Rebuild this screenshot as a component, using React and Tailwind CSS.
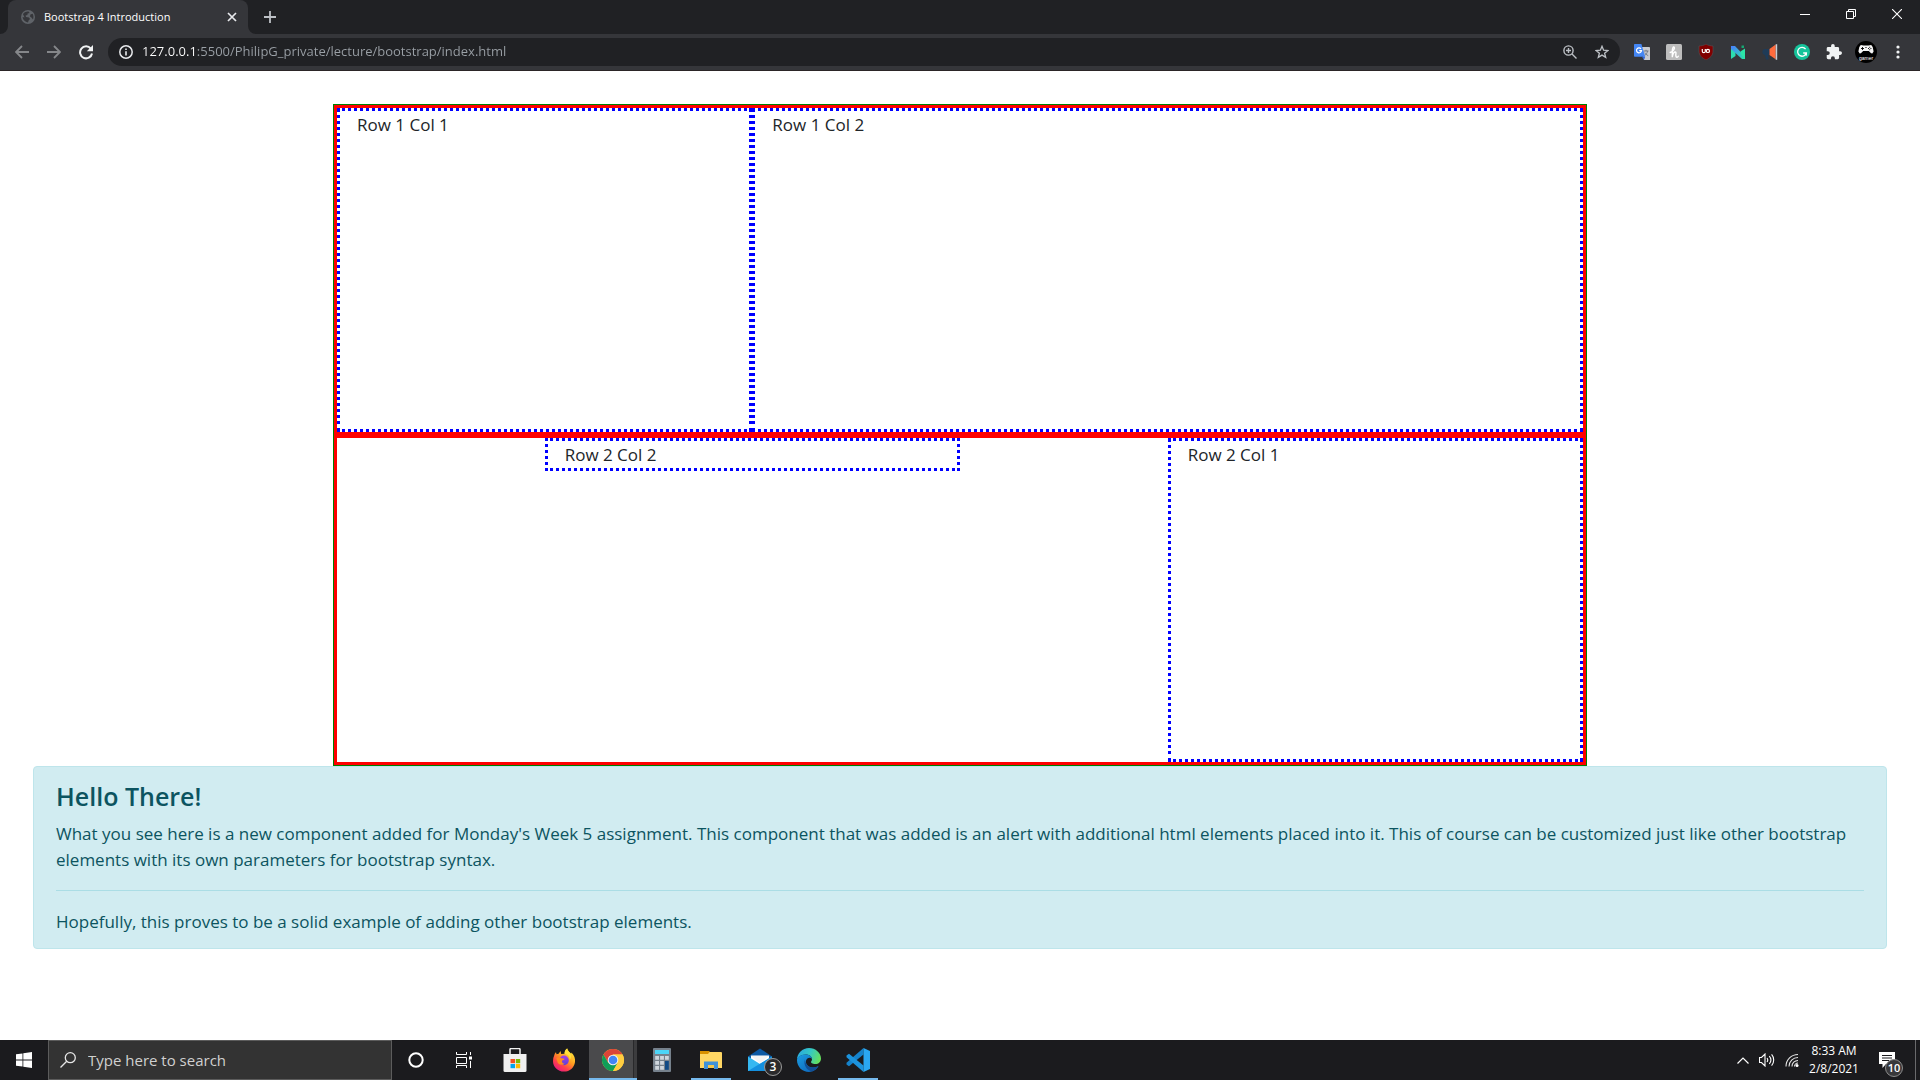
import React from "react";

const ui = "font-['Open_Sans','Noto_Sans',sans-serif]";

function Globe() {
  return (
    <svg viewBox="0 0 14 14" className="size-3.5 shrink-0" aria-hidden="true">
      <circle cx="7" cy="7" r="7" fill="#5f6368" />
      <path d="M2 4.2C3 2.4 5 1.4 7.6 1.6L8.6 3 6.6 3.6 6.4 5 4.6 5.4 5 7l3 .4 1 1.6-1.4 1.4L7 12.4C4 12 1.8 9.600 1.600 7L3.600 7.600z" fill="#35363a" />
      <path d="M9.400 4.600l2.200-.8C12.600 5.400 12.700 7.600 12 9.400L10.400 7.400 9 6.600z" fill="#35363a" />
    </svg>
  );
}

function TabStrip() {
  return (
    <header className="flex h-[34px] items-stretch bg-[#202124]">
      <div className="relative ml-2 flex w-60 items-center rounded-t-lg bg-[#35363a] pl-[13px] pr-2.5">
        <svg viewBox="0 0 8 8" className="absolute bottom-0 -left-2 size-2" aria-hidden="true"><path d="M8 0v8H0a8 8 0 0 0 8-8z" fill="#35363a" /></svg>
        <svg viewBox="0 0 8 8" className="absolute bottom-0 -right-2 size-2" aria-hidden="true"><path d="M0 0v8h8a8 8 0 0 1-8-8z" fill="#35363a" /></svg>
        <Globe />
        <span className="ml-[9px] flex-1 truncate text-[11px] text-white">Bootstrap 4 Introduction</span>
        <button type="button" aria-label="Close tab" className="flex size-3 items-center justify-center">
          <svg viewBox="0 0 10 10" className="size-2.5"><path d="M1 1l8 8M9 1L1 9" stroke="#e8eaed" strokeWidth="1.700" /></svg>
        </button>
      </div>
      <button type="button" aria-label="New tab" className="ml-2 flex w-7 items-center justify-center">
        <svg viewBox="0 0 12 12" className="size-3"><path d="M6 0v12M0 6h12" stroke="#bdc1c6" strokeWidth="1.800" /></svg>
      </button>
      <div className="ml-auto flex h-7">
        <button type="button" aria-label="Minimize" className="flex w-[46px] items-center justify-center">
          <svg viewBox="0 0 10 10" className="size-2.5"><path d="M0 5.500h10" stroke="#fff" /></svg>
        </button>
        <button type="button" aria-label="Restore" className="flex w-[46px] items-center justify-center">
          <svg viewBox="0 0 10 10" className="size-2.5"><path d="M.5 2.500h7v7h-7zM2.500 2.500v-2h7v7h-2" fill="none" stroke="#fff" /></svg>
        </button>
        <button type="button" aria-label="Close" className="flex w-[46px] items-center justify-center">
          <svg viewBox="0 0 10 10" className="size-2.5"><path d="M0 0l10 10M10 0L0 10" stroke="#fff" strokeWidth="1.100" /></svg>
        </button>
      </div>
    </header>
  );
}

function IconButton({ label, children }) {
  return (
    <button type="button" aria-label={label} className="flex size-8 shrink-0 items-center justify-center">
      {children}
    </button>
  );
}

const glyph = "fill-none stroke-[1.8]";

function Toolbar() {
  return (
    <nav className="flex h-[37px] items-center border-b border-[#2b2527] bg-[#35363a] pl-1.5 pr-1.5">
      <IconButton label="Back">
        <svg viewBox="0 0 14 14" className={`size-3.5 stroke-[#85878a] ${glyph}`}><path d="M14 7H1M7 1L1 7l6 6" /></svg>
      </IconButton>
      <IconButton label="Forward">
        <svg viewBox="0 0 14 14" className={`size-3.5 stroke-[#85878a] ${glyph}`}><path d="M0 7h13M7 1l6 6-6 6" /></svg>
      </IconButton>
      <IconButton label="Reload">
        <svg viewBox="0 0 16 16" className="size-4"><path d="M12.800 4.600A6 6 0 1 0 14 9.500" fill="none" stroke="#f1f3f4" strokeWidth="2" /><path d="M15 1v6.200H8.800z" fill="#f1f3f4" /></svg>
      </IconButton>
      <div className="ml-1.5 flex h-7 min-w-0 flex-1 items-center rounded-full bg-[#202124] pl-[11px] pr-0.5">
        <svg viewBox="0 0 14 14" className="size-3.5 shrink-0" aria-hidden="true">
          <circle cx="7" cy="7" r="6.200" fill="none" stroke="#e8eaed" strokeWidth="1.500" />
          <path d="M6.200 3.400h1.600V5H6.200zM6.200 6.200h1.600v4.400H6.200z" fill="#e8eaed" />
        </svg>
        <input
          type="text"
          aria-label="Address"
          defaultValue="127.0.0.1:5500/PhilipG_private/lecture/bootstrap/index.html"
          className="ml-[9px] min-w-0 flex-1 bg-linear-to-r from-white from-[53px] to-[#9aa0a6] to-[53px] bg-clip-text text-[13px] text-transparent outline-none"
        />
        <IconButton label="Zoom">
          <svg viewBox="0 0 14 14" className="size-3.5 fill-none stroke-[#bdc1c6] stroke-[1.4]"><circle cx="5.500" cy="5.500" r="4.600" /><path d="M9 9l4.500 4.500M3 5.500h5M5.500 3v5" /></svg>
        </IconButton>
        <IconButton label="Bookmark this tab">
          <svg viewBox="0 0 14 14" className="size-3.5 fill-none stroke-[#bdc1c6] stroke-[1.3]"><path d="M7 1.300l1.600 3.900 4.300.3-3.300 2.700 1.100 4.200L7 10.100l-3.700 2.300 1.100-4.200L1.100 5.500l4.300-.3z" /></svg>
        </IconButton>
      </div>
      <div className="ml-1.5 flex">
        <IconButton label="Google Translate">
          <svg viewBox="0 0 16 16" className="size-4">
            <path d="M7 3h8.200a.8.800 0 0 1 .8.800V16H10z" fill="#c9cbd0" />
            <path d="M9.500 7h5M12 5.800V7M13.600 7c-.4 2-1.600 3.600-3 4.600M10.800 8.600c.6 1.200 1.900 2.400 3.400 3" stroke="#747a85" fill="none" />
            <path d="M.8 0h6.600l3.800 12.800H.8A.8.800 0 0 1 0 12V.8A.8.800 0 0 1 .8 0z" fill="#4486f4" />
            <path d="M8 12.800h3.200L10 16z" fill="#3367d6" />
            <path d="M7 4.800a2.500 2.500 0 1 0 .5 1.800H5.200" fill="none" stroke="#fff" strokeWidth="1.200" />
          </svg>
        </IconButton>
        <IconButton label="Honey">
          <svg viewBox="0 0 16 16" className="size-4"><rect width="16" height="16" rx="1.500" fill="#bdbdbd" /><path d="M4.200 8.500C7 7.500 9 4.800 8.300 3.300 7.500 2 6.300 4 6.300 7v6.200C6.800 9.800 8 8 9.200 8c1.300 0 .6 1.600.6 3 0 1.400.4 2.200 1.200 2.200.6 0 1-.4 1.300-1" fill="none" stroke="#fff" strokeWidth="1.400" strokeLinecap="round" /></svg>
        </IconButton>
        <IconButton label="uBlock Origin">
          <svg viewBox="0 0 16 16" className="size-4"><path d="M8 0c2 1.500 4.500 1.800 7 2v5c0 4.500-3 7-7 9-4-2-7-4.500-7-9V2c2.500-.2 5-.5 7-2z" fill="#800000" stroke="#58585c" strokeWidth=".5" /><path d="M4.300 5V7.200a1.500 1.500 0 0 0 3 0V5" fill="none" stroke="#fff" strokeWidth="1.200" /><circle cx="9.900" cy="6.900" r="1.600" fill="none" stroke="#fff" strokeWidth="1.200" /></svg>
        </IconButton>
        <IconButton label="Netlify helper">
          <svg viewBox="0 0 16 16" className="size-4">
            <defs><linearGradient id="nGrad" x1="0" x2="1" y1="0" y2="1"><stop offset="0" stopColor="#4a7dff" /><stop offset="1" stopColor="#27e6a4" /></linearGradient></defs>
            <path d="M1 2l4.500 5.500V12L1 15z" fill="#2bdcae" /><path d="M1 2h4L15 12.500V15h-3L1 5z" fill="url(#nGrad)" /><path d="M15 4.500V15l-4.500-5V7.500z" fill="#2ce5a7" /><path d="M11.500 1.500h2.500V4h-2.500z" fill="#16a773" />
          </svg>
        </IconButton>
        <IconButton label="Announcements">
          <svg viewBox="0 0 16 16" className="size-4"><path d="M7.500 5v6H6l.8 4.500H4L3 11.300A3.200 3.200 0 0 1 3 5z" fill="#1f3b57" /><path d="M7.500 5l6.200-4.500v14.800L7.500 11z" fill="#ff6b3d" /><path d="M13.700.2h1.500v15.600h-1.500z" fill="#c4cdd6" /></svg>
        </IconButton>
        <IconButton label="Grammarly">
          <svg viewBox="0 0 16 16" className="size-4"><circle cx="8" cy="8" r="8" fill="#15c39a" /><path d="M11.600 5.200A4.400 4.400 0 1 0 12.300 9H9.200M12.400 9l-.2 2.600" fill="none" stroke="#fff" strokeWidth="1.300" /></svg>
        </IconButton>
        <IconButton label="Extensions">
          <svg viewBox="1 1 22 22" className="size-4"><path d="M20.500 11H19V7a2 2 0 0 0-2-2h-4V3.500a2.500 2.500 0 0 0-5 0V5H4a2 2 0 0 0-2 2v3.800h1.500a2.700 2.700 0 0 1 0 5.400H2V20a2 2 0 0 0 2 2h3.800v-1.500a2.700 2.700 0 0 1 5.400 0V22H17a2 2 0 0 0 2-2v-4h1.500a2.500 2.500 0 0 0 0-5z" fill="#f1f3f4" /></svg>
        </IconButton>
        <IconButton label="Profile">
          <svg viewBox="0 0 22 22" className="size-[22px]">
            <circle cx="11" cy="11" r="11" fill="#000" />
            <path d="M5.800 4l2.700.6h5L16.200 4l1.500 2 .9 4.500-1.300 2-1.200-.2-2.300-2.300H8.200l-2.300 2.300-1.200.2-1.300-2L4.300 6z" fill="#f5f5f5" />
            <path d="M6 7.500h3M7.500 6v3M13 7.500h1M15.400 7.500h1M14.200 6.300h1M14.200 8.700h1M10.400 6.500h1.200" stroke="#000" strokeWidth=".9" />
            <text x="11" y="18.500" textAnchor="middle" fontSize="5" fill="#fff" fontFamily="Liberation Sans">gamer</text>
          </svg>
        </IconButton>
        <IconButton label="Menu">
          <svg viewBox="0 0 4 14" className="h-3.5 w-1" fill="#f1f3f4"><circle cx="2" cy="2" r="1.600" /><circle cx="2" cy="7" r="1.600" /><circle cx="2" cy="12" r="1.600" /></svg>
        </IconButton>
      </div>
    </nav>
  );
}

const col = "border-[3px] border-dotted border-[#0000ff] px-[17px]";
const row = "grid h-[330px] grid-cols-12 items-start border-[3px] border-[#ff0000]";

function Page() {
  return (
    <main className="flex-1 bg-white px-[33px] pt-[33px] text-[17px] leading-[27px] text-[#212529]">
      <div className="mx-auto max-w-[1254px] border border-[#008000]">
        <div className={row}>
          <div className={`col-span-4 h-full ${col}`}>Row 1 Col 1</div>
          <div className={`col-span-8 h-full ${col}`}>Row 1 Col 2</div>
        </div>
        <div className={row}>
          <div className={`col-span-4 col-start-3 ${col}`}>Row 2 Col 2</div>
          <div className={`col-span-4 col-start-9 h-full ${col}`}>Row 2 Col 1</div>
        </div>
      </div>
      <section role="alert" className="rounded border border-[#bee5eb] bg-[#d1ecf1] px-[22px] py-[13px] leading-[26px] text-[#0c5460]">
        <h4 className="mb-[9px] text-[25px] leading-8 font-semibold">Hello There!</h4>
        <p>
          What you see here is a new component added for Monday's Week 5 assignment. This component that was added is an alert with additional html elements placed into it. This of course can be customized just like other bootstrap elements with its own parameters for bootstrap syntax.
        </p>
        <hr className="mt-[17px] mb-[18px] border-[#abdde5]" />
        <p>Hopefully, this proves to be a solid example of adding other bootstrap elements.</p>
      </section>
    </main>
  );
}

function TaskButton({ label, state, children }) {
  return (
    <button type="button" aria-label={label} className={`relative flex w-12 items-center justify-center ${state === "active" ? "bg-[#4a4a4c]" : ""}`}>
      {children}
      {state === "active" && <span className="absolute inset-y-0 right-0 w-1 border-l border-[#29292b] bg-[#3c3c3e]" />}
      {state === "active" && <span className="absolute inset-x-0 bottom-0 h-0.5 bg-[#76b9ed]" />}
      {state === "open" && <span className="absolute inset-x-1 bottom-0 h-0.5 bg-[#76b9ed]" />}
    </button>
  );
}

function Taskbar() {
  return (
    <footer className="flex h-10 items-stretch bg-[#1b1b1e] text-white">
      <button type="button" aria-label="Start" className="flex w-12 items-center justify-center">
        <svg viewBox="0 0 16 16" className="size-4" fill="#fff"><path d="M0 2.300l6.500-.9v6.200H0zM7.300 1.300L16 0v7.600H7.300zM0 8.400h6.500v6.200L0 13.700zM7.300 8.400H16V16l-8.700-1.300z" /></svg>
      </button>
      <label className="flex w-[344px] items-center border border-[#5c5c5c] bg-[#333333] pl-[11px]">
        <svg viewBox="0 0 16 16" className="size-4 shrink-0 fill-none stroke-[#e6e6e6] stroke-[1.3]" aria-hidden="true"><circle cx="10.300" cy="5.700" r="5" /><path d="M6.700 9.300L.5 15.500" /></svg>
        <input type="search" aria-label="Search" placeholder="Type here to search" className="ml-3 min-w-0 flex-1 bg-transparent text-[15px] outline-none placeholder:text-[#d0d0d0]" />
      </label>
      <button type="button" aria-label="Cortana" className="flex w-12 items-center justify-center">
        <svg viewBox="0 0 16 16" className="size-4"><circle cx="8" cy="8" r="6.700" fill="none" stroke="#fff" strokeWidth="2" /></svg>
      </button>
      <button type="button" aria-label="Task view" className="flex w-12 items-center justify-center">
        <svg viewBox="0 0 16 16" className="size-4 fill-none stroke-white"><path d="M.5 0v2.500h10V0M.5 5.500h10v6H.5zM.5 16v-2.500h10V16M14.500 0v3M14.500 9v7" /><path d="M13 4.500h3v3h-3z" fill="#fff" stroke="none" /></svg>
      </button>
      <div className="ml-[3px] flex gap-px">
        <TaskButton label="Microsoft Store">
          <svg viewBox="0 0 24 24" className="size-6">
            <path d="M7 6V1.600a1 1 0 0 1 1-1h8a1 1 0 0 1 1 1V6" fill="none" stroke="#f2f2f2" strokeWidth="1.500" />
            <path d="M.5 6h23v16.500a1.500 1.500 0 0 1-1.500 1.500H2a1.500 1.500 0 0 1-1.500-1.500z" fill="#f0f0f0" />
            <path d="M7.500 11H12v4.200H7.500z" fill="#f25022" /><path d="M12.800 11h4.400v4.200h-4.400z" fill="#7fba00" /><path d="M7.500 16H12v4.200H7.500z" fill="#00a4ef" /><path d="M12.800 16h4.400v4.200h-4.400z" fill="#ffb900" />
          </svg>
        </TaskButton>
        <TaskButton label="Firefox">
          <svg viewBox="0 0 24 24" className="size-6">
            <defs>
              <linearGradient id="ffBody" x1=".8" x2=".2" y1=".1" y2="1"><stop offset="0" stopColor="#ffe53b" /><stop offset=".4" stopColor="#ff9a1f" /><stop offset=".7" stopColor="#ff3f4b" /><stop offset="1" stopColor="#e31587" /></linearGradient>
              <linearGradient id="ffCore" x1="0" x2="0" y1="0" y2="1"><stop offset="0" stopColor="#a63fe8" /><stop offset="1" stopColor="#5b3fd6" /></linearGradient>
            </defs>
            <path d="M2.200 7.600C2.500 6 3.200 4.800 4 4.200l.5 2L6.600 5.700 8.500 3l.7 3 3.400-.2C12.400 3 13.800 1.200 15.200.4c.6 2.600 2.400 3.400 4 5.400l.2-1.400c3 3 4 6 3.600 9.600C22.300 19.600 17.800 23.600 12 23.600 5.800 23.600 1 19 1 13c0-2 .4-3.800 1.200-5.400z" fill="url(#ffBody)" />
            <circle cx="12" cy="12.400" r="4.800" fill="url(#ffCore)" />
            <path d="M4.400 10.200c1.200-1.400 3.800-1 5 0l3.200.6c-.2 1-1.800 1.400-2.600 2-.4 2 1 3 3 2.800-2 2-6 1.600-7.400-1z" fill="#ff8a20" />
            <path d="M15.200.4c-1.400.8-2.800 2.600-2.600 5.400 3.600.4 5.200 3 5 6 2-1.600 1.800-4.400.6-6.600C17 3.600 15.600 2.600 15.200.4z" fill="#ffdf3a" />
          </svg>
        </TaskButton>
        <TaskButton label="Google Chrome" state="active">
          <svg viewBox="0 0 24 24" className="size-6">
            <circle cx="12" cy="12" r="11" fill="#ffcd40" />
            <path d="M2.470 6.500A11 11 0 0 1 21.530 6.500L12 6.500 7.200 14.700z" fill="#db4437" />
            <path d="M2.470 6.500A11 11 0 0 0 12 23l4.800-8.200H7.200z" fill="#0f9d58" />
            <path d="M21.530 6.500A11 11 0 0 1 12 23l4.800-8.200L12 6.500z" fill="#ffcd40" />
            <circle cx="12" cy="12" r="5.300" fill="#f1f1f1" /><circle cx="12" cy="12" r="4.300" fill="#4285f4" />
          </svg>
        </TaskButton>
        <TaskButton label="Calculator">
          <svg viewBox="0 0 18 24" className="h-6 w-[18px]">
            <rect width="18" height="24" rx="1" fill="#76818c" /><path d="M2 2h14v4H2z" fill="#4cd5f7" />
            <path d="M2.200 8H6v3.800H2.200zM7.100 8h3.800v3.800H7.100zM12 8h3.800v3.800H12zM2.200 13H6v3.800H2.200zM7.100 13h3.800v3.800H7.100zM2.200 18H6v3.800H2.200zM7.100 18h3.800v3.800H7.100z" fill="#cfd6dd" /><path d="M12 13h3.800v8.800H12z" fill="#104a86" />
          </svg>
        </TaskButton>
        <TaskButton label="File Explorer" state="open">
          <svg viewBox="0 0 22 20" className="h-5 w-[22px]">
            <path d="M0 2h9l2 2H0z" fill="#d99100" /><path d="M0 1h9.500v3H0z" fill="#d99100" />
            <path d="M9.500 2H21a1 1 0 0 1 1 1v15H0V4h8z" fill="#ffd764" />
            <path d="M4 11.500h14V19h-4v-4H8v4H4z" fill="#3f92d8" /><path d="M8 15h6v3H8z" fill="#f3c74c" />
          </svg>
        </TaskButton>
        <TaskButton label="Mail">
          <svg viewBox="0 0 24 24" className="size-6">
            <path d="M0 8.500L12 .5l12 8v3H0z" fill="#0c59a4" /><path d="M3 7.500h18v9H3z" fill="#fff" />
            <path d="M0 8.500L12 16 24 8.500V23H0z" fill="#35b8f1" /><path d="M0 23L24 8.500V23z" fill="#1490df" />
            <path d="M3 8l18 0-9 7z" fill="#f4f4f4" />
          </svg>
          <span className="absolute right-0.5 bottom-1 flex size-[18px] items-center justify-center rounded-full border border-[#9b9b9b] bg-[#2a2a2c] text-xs font-semibold">3</span>
        </TaskButton>
        <TaskButton label="Microsoft Edge">
          <svg viewBox="0 0 24 24" className="size-6">
            <defs>
              <linearGradient id="edTop" x1="0" x2="1" y1=".3" y2=".6"><stop offset="0" stopColor="#2aa9e0" /><stop offset=".5" stopColor="#35c8c4" /><stop offset="1" stopColor="#66e05a" /></linearGradient>
              <linearGradient id="edSide" x1="0" x2="1" y1="0" y2="1"><stop offset="0" stopColor="#1b9de2" /><stop offset="1" stopColor="#0c5fb5" /></linearGradient>
            </defs>
            <path d="M0 12C0 5 5.500 0 12 0s12 5 12 10.500c0 3.500-2.500 5.500-5.500 5.500-3.500 0-4.500-1.400-4.500-2 0-.7 1-1.200 1-3C15 8.500 12 6.500 8.500 6.500 3.500 6.500 0 10 0 12z" fill="url(#edTop)" />
            <path d="M0 12c0-3 3.500-5.500 8.500-5.500C12 6.500 15 8.500 15 11c-1-1.600-3.400-1.800-4.600-.4C7 13.500 9.500 19.500 16 19.500c2.500 0 4.500-.8 5.500-1.400C19.500 21.700 16 24 12 24 5.500 24 0 19 0 12z" fill="url(#edSide)" />
            <path d="M8 11.500C6 17 10 23 15.500 23.300 18.300 22.400 20.400 20.600 21.500 18.100c-1.500.9-3.300 1.400-5.500 1.400-4.500 0-8-3.500-8-8z" fill="#124f96" />
          </svg>
        </TaskButton>
        <TaskButton label="Visual Studio Code" state="open">
          <svg viewBox="0 0 24 24" className="size-6">
            <path d="M17.500 0v6.500L3 18.200.500 16.400v-1.600z" fill="#1583cc" /><path d="M17.500 24v-6.500L3 5.800.5 7.600v1.600z" fill="#1c93dd" />
            <path d="M17.500 0L24 3v18l-6.500 3z" fill="#2aa7f2" />
          </svg>
        </TaskButton>
      </div>
      <div className="ml-auto flex items-center">
        <button type="button" aria-label="Show hidden icons" className="flex w-6 justify-center">
          <svg viewBox="0 0 12 7" className="h-[7px] w-3 fill-none stroke-white stroke-[1.2]"><path d="M.5 6.500L6 1l5.500 5.500" /></svg>
        </button>
        <button type="button" aria-label="Volume" className="flex w-6 justify-center">
          <svg viewBox="0 0 16 14" className="h-3.5 w-4 fill-none stroke-white stroke-[1.1]"><path d="M.5 4.500h2L6 1v12L2.500 9.500h-2zM8 5c.9 1.200.9 2.800 0 4M10.300 3.200c1.900 2.200 1.900 5.400 0 7.600M12.600 1.400c2.800 3.200 2.800 8 0 11.200" /></svg>
        </button>
        <button type="button" aria-label="Network" className="ml-px flex w-6 justify-center">
          <svg viewBox="0 0 14 14" className="size-3.5 fill-none stroke-[#e6e6e6] stroke-[1.1]"><path d="M1 13.500C1 6.500 6.500 1.500 13 1.500M4 13.500c0-5 4-9 9-9M7 13.500c0-3.400 2.600-6 6-6M9.500 13.500c0-1.900 1.600-3.500 3.500-3.500" /><circle cx="12" cy="12.400" r="1.500" fill="#fff" stroke="none" /></svg>
        </button>
        <button type="button" className="ml-[5px] w-[50px] text-center text-xs leading-[18px] whitespace-nowrap">
          8:33 AM<br />2/8/2021
        </button>
        <button type="button" aria-label="Notifications" className="relative flex h-10 w-14 items-center justify-center">
          <svg viewBox="0 0 16 16" className="size-4"><path d="M0 0h16v12H7l-3.500 4v-4H0z" fill="#fff" /><path d="M3 3.500h10M3 6h10M3 8.500h7" stroke="#1b1b1e" /></svg>
          <span className="absolute right-3 bottom-[3px] flex size-[18px] items-center justify-center rounded-full border border-[#8c8c8c] bg-[#38383a] text-[11px] font-semibold">10</span>
        </button>
        <button type="button" aria-label="Show desktop" className="h-10 w-[5px] border-l border-[#6a6a6c]" />
      </div>
    </footer>
  );
}

export default function App() {
  return (
    <div className={`flex min-h-screen flex-col ${ui}`}>
      <TabStrip />
      <Toolbar />
      <Page />
      <Taskbar />
    </div>
  );
}
